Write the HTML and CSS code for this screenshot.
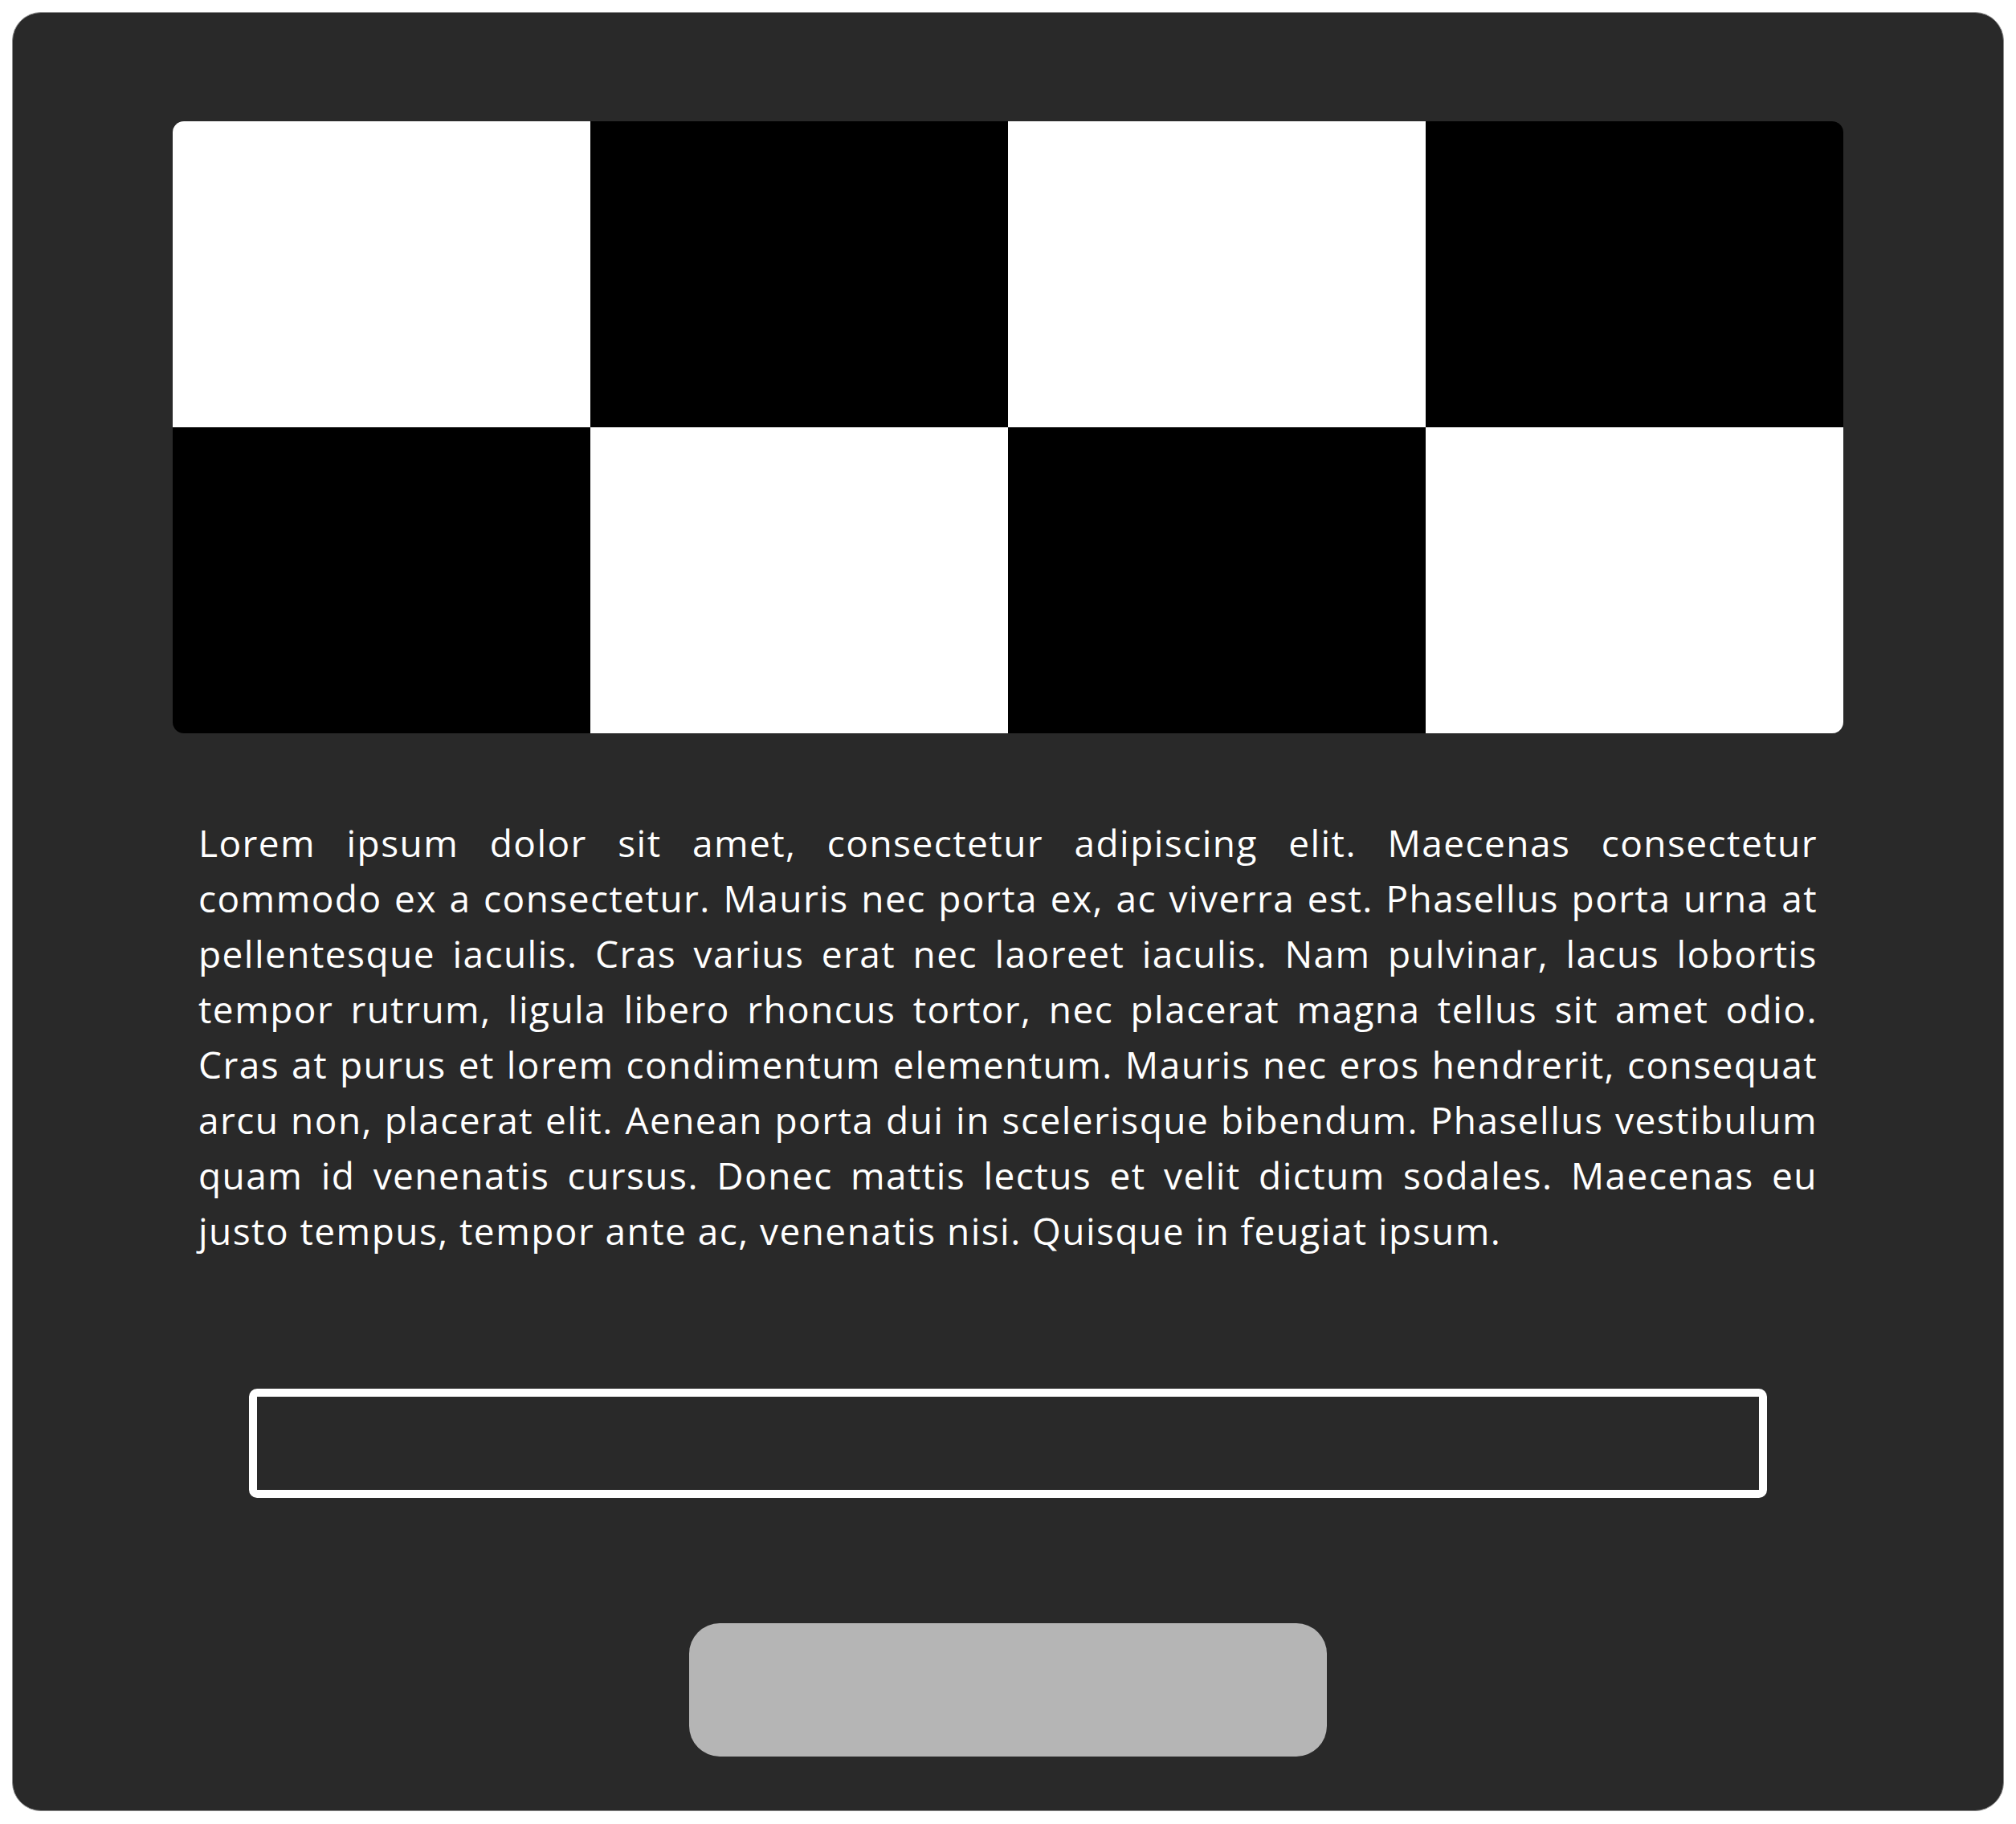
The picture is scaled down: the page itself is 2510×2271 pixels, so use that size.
FILE: index.html
```html
<!DOCTYPE html>
<html lang="en">
<head>
<meta charset="utf-8">
<title>Card</title>
<link rel="stylesheet" href="styles.css">
</head>
<body>
<main class="card">
  <div class="checker">
    <div class="cell white"></div>
    <div class="cell black"></div>
    <div class="cell white"></div>
    <div class="cell black"></div>
    <div class="cell black"></div>
    <div class="cell white"></div>
    <div class="cell black"></div>
    <div class="cell white"></div>
  </div>
  <p class="text">
    <span class="line">Lorem ipsum dolor sit amet, consectetur adipiscing elit. Maecenas consectetur</span>
    <span class="line">commodo ex a consectetur. Mauris nec porta ex, ac viverra est. Phasellus porta urna at</span>
    <span class="line">pellentesque iaculis. Cras varius erat nec laoreet iaculis. Nam pulvinar, lacus lobortis</span>
    <span class="line">tempor rutrum, ligula libero rhoncus tortor, nec placerat magna tellus sit amet odio.</span>
    <span class="line">Cras at purus et lorem condimentum elementum. Mauris nec eros hendrerit, consequat</span>
    <span class="line">arcu non, placerat elit. Aenean porta dui in scelerisque bibendum. Phasellus vestibulum</span>
    <span class="line">quam id venenatis cursus. Donec mattis lectus et velit dictum sodales. Maecenas eu</span>
    <span class="line last">justo tempus, tempor ante ac, venenatis nisi. Quisque in feugiat ipsum.</span>
  </p>
  <input class="field" type="text" aria-label="Input">
  <button class="button" type="button"></button>
</main>
</body>
</html>
```
FILE: styles.css
```css
html, body {
  margin: 0;
  padding: 0;
  background: #ffffff;
}

body {
  padding: 15px 0 0 15px;
  font-family: "Open Sans", "Liberation Sans", sans-serif;
}

.card {
  box-sizing: border-box;
  width: 2480px;
  height: 2240px;
  background: #292929;
  border: 1px solid #8c8c8c;
  border-radius: 36px;
  padding: 135px 199px 0 199px;
  display: flex;
  flex-direction: column;
  align-items: stretch;
}

.checker {
  height: 762px;
  display: grid;
  grid-template-columns: repeat(4, 1fr);
  grid-template-rows: repeat(2, 1fr);
  border-radius: 14px;
  overflow: hidden;
}

.cell.white { background: #ffffff; }
.cell.black { background: #000000; }

.text {
  margin: 102px 0 0 0;
  padding: 0 32px;
  color: #ffffff;
  font-size: 46px;
  line-height: 69px;
  letter-spacing: 1.45px;
}

.line {
  display: block;
  white-space: nowrap;
  text-align: justify;
  text-align-last: justify;
}

.line.last {
  text-align-last: left;
}

.field {
  box-sizing: border-box;
  display: block;
  align-self: center;
  width: 1890px;
  height: 136px;
  margin: 162px 0 0 0;
  padding: 0;
  background: transparent;
  border: 10px solid #ffffff;
  border-radius: 10px;
  outline: none;
}

.button {
  display: block;
  align-self: center;
  width: 794px;
  height: 166px;
  margin-top: 156px;
  padding: 0;
  border: none;
  border-radius: 38px;
  background: #b5b5b5;
}
```
